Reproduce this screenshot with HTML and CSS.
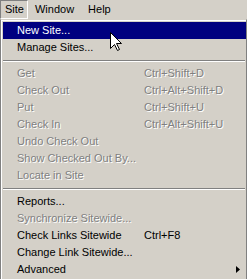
FILE: index.html
```html
<!DOCTYPE html>
<html>
<head>
<meta charset="utf-8">
<link rel="stylesheet" href="styles.css">
</head>
<body>
<div class="menubar">
  <div class="mb-item active">Site</div>
  <div class="mb-item">Window</div>
  <div class="mb-item">Help</div>
</div>
<div class="menu">
  <div class="item hl"><span class="label">New Site...</span></div>
  <div class="item"><span class="label">Manage Sites...</span></div>
  <div class="sep"></div>
  <div class="item dis"><span class="label">Get</span><span class="key">Ctrl+Shift+D</span></div>
  <div class="item dis"><span class="label">Check Out</span><span class="key">Ctrl+Alt+Shift+D</span></div>
  <div class="item dis"><span class="label">Put</span><span class="key">Ctrl+Shift+U</span></div>
  <div class="item dis"><span class="label">Check In</span><span class="key">Ctrl+Alt+Shift+U</span></div>
  <div class="item dis"><span class="label">Undo Check Out</span></div>
  <div class="item dis"><span class="label">Show Checked Out By...</span></div>
  <div class="item dis"><span class="label">Locate in Site</span></div>
  <div class="sep"></div>
  <div class="item"><span class="label">Reports...</span></div>
  <div class="item dis"><span class="label">Synchronize Sitewide...</span></div>
  <div class="item"><span class="label">Check Links Sitewide</span><span class="key">Ctrl+F8</span></div>
  <div class="item"><span class="label">Change Link Sitewide...</span></div>
  <div class="item"><span class="label">Advanced</span><svg class="arrow" width="4" height="7" viewBox="0 0 4 7"><polygon points="0,0 4,3.5 0,7" fill="#000"/></svg></div>
</div>
<svg class="cursor" width="13" height="20" viewBox="0 0 13 20"><path d="M0.5 0.5 L0.5 16.5 L4.5 12.5 L7.5 18.5 L9.5 17.5 L6.5 11.5 L11.5 11.5 Z" fill="#fff" stroke="#000" stroke-width="1" stroke-linejoin="miter"/></svg>
</body>
</html>
```
FILE: styles.css
```css
html, body {
  margin: 0;
  padding: 0;
  background: #d4d0c8;
  font-family: "Liberation Sans", Arial, sans-serif;
  font-size: 11px;
  color: #000;
  overflow: hidden;
}
.menubar {
  display: flex;
  height: 19px;
}
.mb-item {
  height: 17px;
  line-height: 17px;
  padding: 0 6px 0 7px;
  border: 1px solid transparent;
  border-left: 0;
}
.mb-item.active {
  border: 1px solid;
  border-color: #808080 #fff #fff #808080;
  padding: 0 3px 0 4px;
}
.menu {
  border-style: solid;
  border-width: 1px;
  border-color: #d4d0c8 #808080 #404040 #808080;
  box-shadow: inset 1px 1px 0 #fff;
  padding: 2px 0 0 2px;
  height: 257px;
}
.item {
  display: grid;
  grid-template-columns: 127px 1fr auto;
  align-items: center;
  height: 17px;
  line-height: 17px;
  padding-left: 14px;
  padding-right: 6px;
  white-space: nowrap;
}
.item .key { grid-column: 2; }
.item .arrow { grid-column: 3; }
.item.hl {
  background: #000080;
  color: #fff;
}
.item.dis {
  color: #808080;
  text-shadow: 1px 1px 0 #fff;
}
.sep {
  height: 9px;
  box-sizing: border-box;
  padding: 4px 1px 0 0;
}
.sep::after {
  content: "";
  display: block;
  height: 0;
  border-top: 1px solid #808080;
  border-bottom: 1px solid #fff;
}
.cursor {
  position: absolute;
  left: 110px;
  top: 32px;
}
```
